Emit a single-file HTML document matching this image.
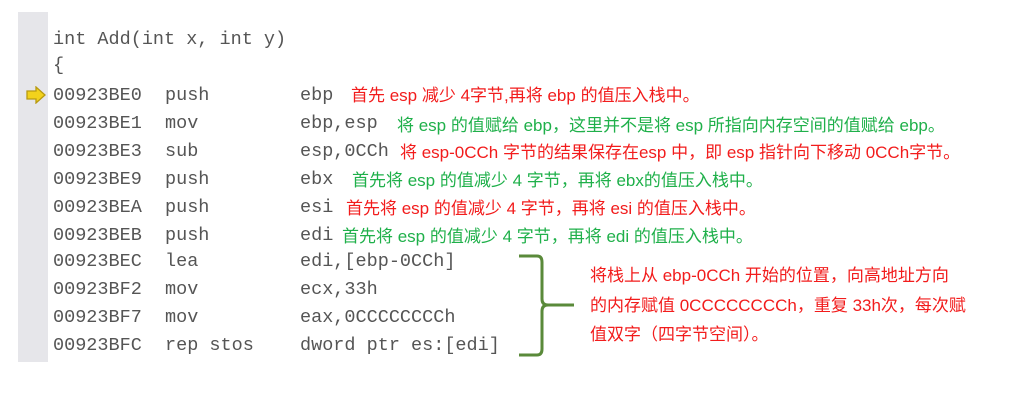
<!DOCTYPE html>
<html><head><meta charset="utf-8"><style>
body{margin:0;width:1024px;height:400px;background:#fff;position:relative;overflow:hidden}
.g{position:absolute;left:18px;top:12px;width:30px;height:350px;background:#e6e6ea}
.l{position:absolute;font-family:"Liberation Mono",monospace;font-size:18.5px;color:#555;white-space:pre;line-height:20px}
.c{position:absolute;font-family:"Liberation Sans","Noto Sans CJK SC",sans-serif;font-size:17px;white-space:pre;line-height:20px}
.r{color:#f21c1c}.gr{color:#1fb04a}
</style></head><body>
<div class="g"></div>
<svg style="position:absolute;left:25px;top:86px" width="22" height="18" viewBox="0 0 22 18"><path d="M2 5h9V1l9 8-9 8v-4H2z" fill="#f2d21c" stroke="#b89a10" stroke-width="1.3"/></svg>
<div class="l" style="left:53px;top:30px">int Add(int x, int y)</div>
<div class="l" style="left:53px;top:56px">{</div>
<div class="l" style="left:53px;top:86px">00923BE0</div><div class="l" style="left:165px;top:86px">push</div><div class="l" style="left:300px;top:86px">ebp</div>
<div class="l" style="left:53px;top:114px">00923BE1</div><div class="l" style="left:165px;top:114px">mov</div><div class="l" style="left:300px;top:114px">ebp,esp</div>
<div class="l" style="left:53px;top:142px">00923BE3</div><div class="l" style="left:165px;top:142px">sub</div><div class="l" style="left:300px;top:142px">esp,0CCh</div>
<div class="l" style="left:53px;top:170px">00923BE9</div><div class="l" style="left:165px;top:170px">push</div><div class="l" style="left:300px;top:170px">ebx</div>
<div class="l" style="left:53px;top:198px">00923BEA</div><div class="l" style="left:165px;top:198px">push</div><div class="l" style="left:300px;top:198px">esi</div>
<div class="l" style="left:53px;top:226px">00923BEB</div><div class="l" style="left:165px;top:226px">push</div><div class="l" style="left:300px;top:226px">edi</div>
<div class="l" style="left:53px;top:252px">00923BEC</div><div class="l" style="left:165px;top:252px">lea</div><div class="l" style="left:300px;top:252px">edi,[ebp-0CCh]</div>
<div class="l" style="left:53px;top:280px">00923BF2</div><div class="l" style="left:165px;top:280px">mov</div><div class="l" style="left:300px;top:280px">ecx,33h</div>
<div class="l" style="left:53px;top:308px">00923BF7</div><div class="l" style="left:165px;top:308px">mov</div><div class="l" style="left:300px;top:308px">eax,0CCCCCCCCh</div>
<div class="l" style="left:53px;top:336px">00923BFC</div><div class="l" style="left:165px;top:336px">rep stos</div><div class="l" style="left:300px;top:336px">dword ptr es:[edi]</div>
<div class="c r" style="left:351px;top:86px">首先 esp 减少 4字节,再将 ebp 的值压入栈中。</div>
<div class="c gr" style="left:397px;top:116px">将 esp 的值赋给 ebp，这里并不是将 esp 所指向内存空间的值赋给 ebp。</div>
<div class="c r" style="left:400px;top:143px">将 esp-0CCh 字节的结果保存在esp 中，即 esp 指针向下移动 0CCh字节。</div>
<div class="c gr" style="left:352px;top:171px">首先将 esp 的值减少 4 字节，再将 ebx的值压入栈中。</div>
<div class="c r" style="left:346px;top:199px">首先将 esp 的值减少 4 字节，再将 esi 的值压入栈中。</div>
<div class="c gr" style="left:342px;top:227px">首先将 esp 的值减少 4 字节，再将 edi 的值压入栈中。</div>
<svg style="position:absolute;left:0;top:0" width="1024" height="400"><path d="M519 256h18q5 0 5 6v37q0 6 6 6h26M548 305q-6 0-6 6v38q0 6-5 6h-18" fill="none" stroke="#5a8a3a" stroke-width="3"/></svg>
<div class="c r" style="left:590px;top:266px">将栈上从 ebp-0CCh 开始的位置，向高地址方向</div>
<div class="c r" style="left:590px;top:296px">的内存赋值 0CCCCCCCCh，重复 33h次，每次赋</div>
<div class="c r" style="left:590px;top:325px">值双字（四字节空间）。</div>
</body></html>
